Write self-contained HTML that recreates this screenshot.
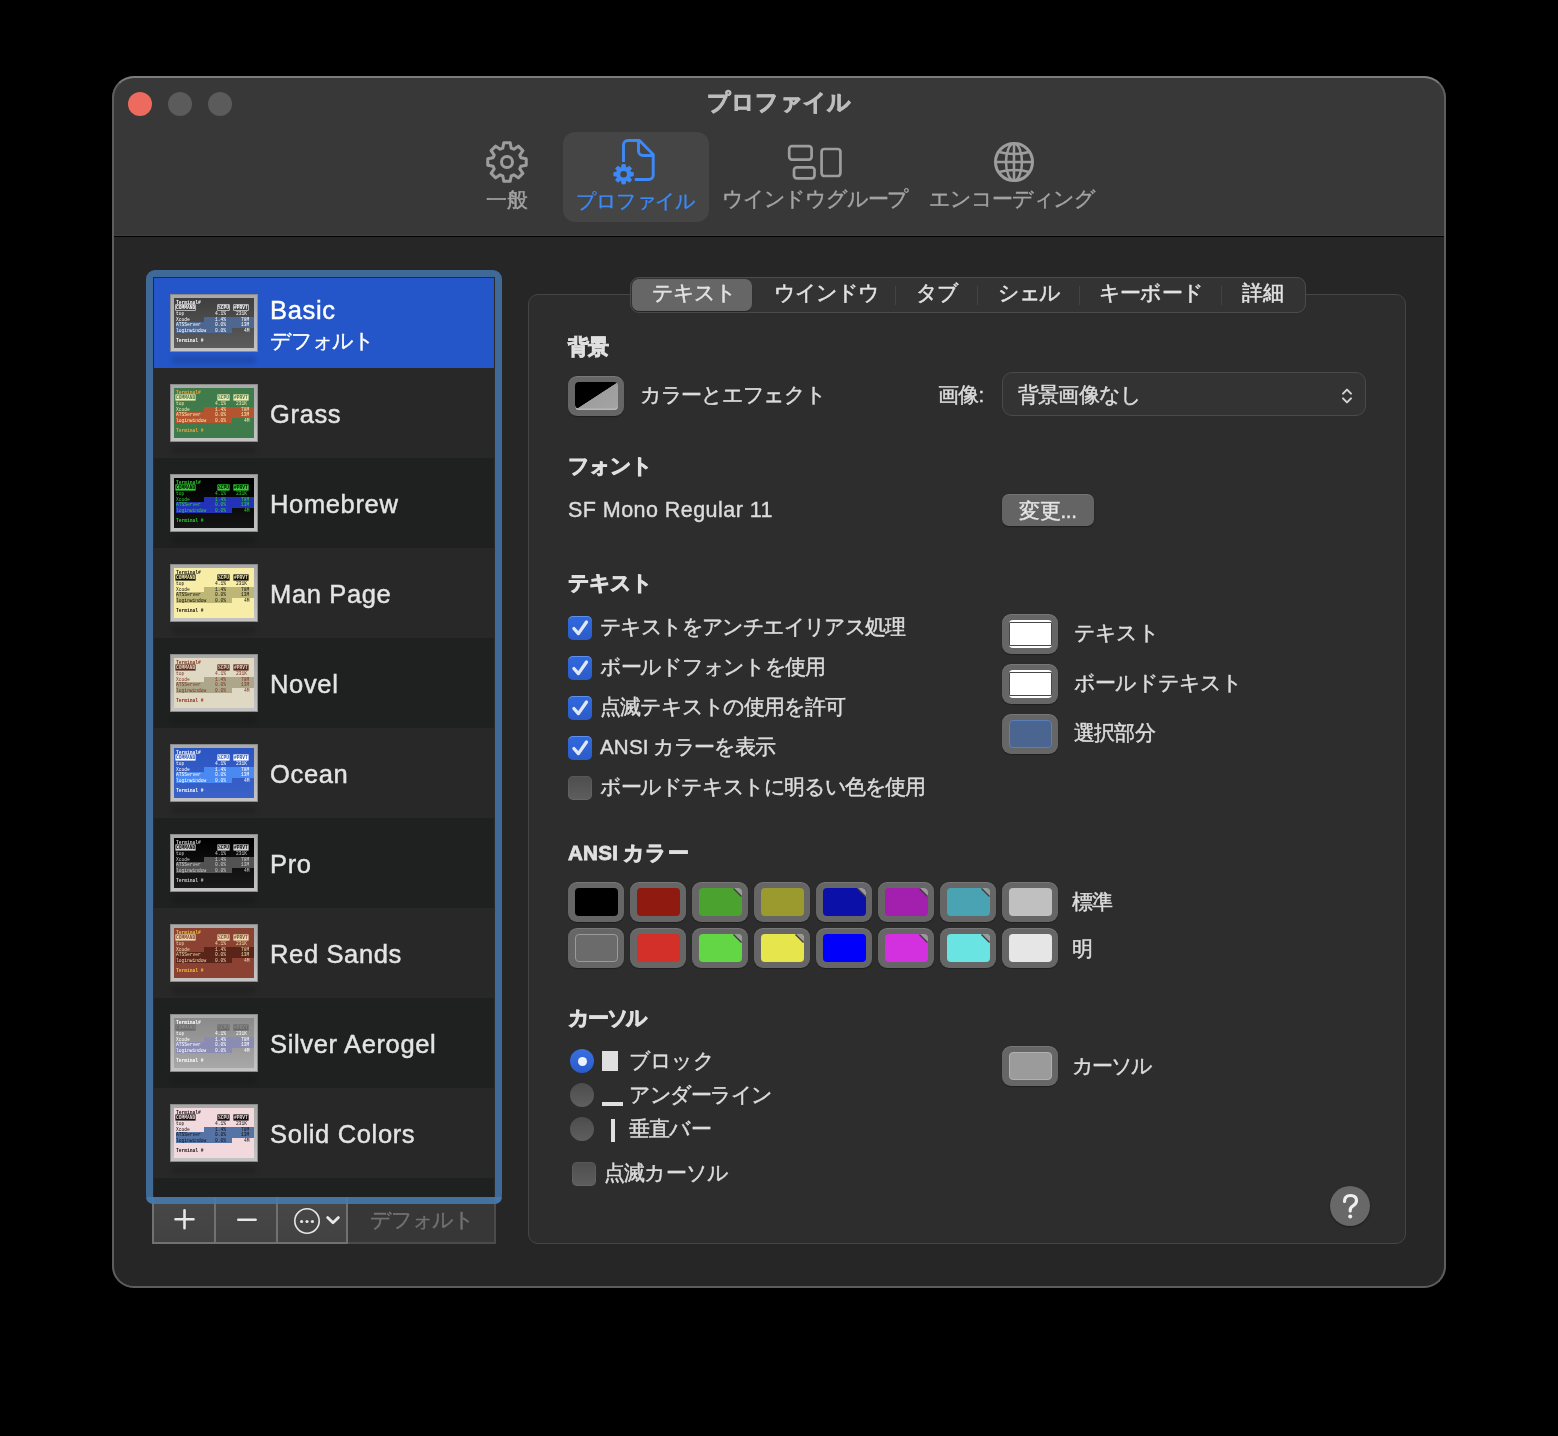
<!DOCTYPE html><html><head><meta charset="utf-8"><style>
*{box-sizing:border-box;margin:0;padding:0}
html,body{width:1558px;height:1436px;background:#000;overflow:hidden;font-family:'Liberation Sans',sans-serif;}
.a{position:absolute}
.t{position:absolute;white-space:nowrap;line-height:1;color:#dedede;will-change:transform;-webkit-text-stroke-width:0.4px}
.win{position:absolute;left:112px;top:76px;width:1334px;height:1212px;border-radius:22px;background:#262626;overflow:hidden;}
.winb{position:absolute;left:112px;top:76px;width:1334px;height:1212px;border-radius:22px;border:2px solid #5d5d5d;border-top-color:#7c7c7c;pointer-events:none}
.title{position:absolute;left:0;top:0;width:1334px;height:161px;background:#373837;border-bottom:1px solid #020202;box-shadow:inset 0 -1px 0 #3e3f3e}
.dot{position:absolute;width:24px;height:24px;border-radius:50%}
.thumb{position:absolute;width:88px;height:58px;background:linear-gradient(#a9a9a9,#c4c4c4);border:1px solid #8a8a8a}
.thumb .in{position:absolute;left:3px;top:3px;width:80px;height:50px;overflow:hidden;font-family:'Liberation Mono',monospace;font-size:4.6px;line-height:5px;font-weight:normal;will-change:transform}
.row{position:absolute;left:154px;width:340px;height:90px}
.lbl{position:absolute;will-change:transform;-webkit-text-stroke-width:0.45px;left:270px;font-size:25.5px;letter-spacing:0.65px;color:#e4e4e4;white-space:nowrap;line-height:1}
.cb{position:absolute;width:24px;height:24px;border-radius:5px}
.cbon{background:linear-gradient(#3069de,#2b5cc9);box-shadow:inset 0 1px 0 rgba(140,180,255,0.5)}
.cboff{background:linear-gradient(#4e4e4e,#5e5e5e);box-shadow:inset 0 0 0 1px rgba(255,255,255,0.05)}
.well{position:absolute;width:56px;height:40px;border-radius:9px;background:#666;box-shadow:inset 0 1px 0 rgba(255,255,255,0.12),0 0.5px 1px rgba(0,0,0,0.3)}
.well .sw{position:absolute;left:6.6px;top:6.3px;width:43px;height:27.5px;border-radius:4px;overflow:hidden}
.radio{position:absolute;width:24px;height:24px;border-radius:50%}
</style></head><body><div class="win">
<div class="title"></div>
</div>
<div class="winb"></div>
<div class="dot a" style="left:128px;top:92px;background:#ec6a5e"></div>
<div class="dot a" style="left:168px;top:92px;background:#5b5b5b"></div>
<div class="dot a" style="left:208px;top:92px;background:#5b5b5b"></div>
<div class="t" style="left:707px;top:92px;font-size:22.5px;font-weight:bold;color:#bdbdbd;-webkit-text-stroke:0.9px #bdbdbd">プロファイル</div>
<div class="a" style="left:563px;top:132px;width:146px;height:90px;border-radius:12px;background:#454545"></div>
<svg class="a" style="left:486px;top:141px" width="42" height="42" viewBox="0 0 42 42"><path d="M34.88,16.79 L40.24,17.80 L40.24,24.20 L34.88,25.21 L33.79,27.84 L36.87,32.34 L32.34,36.87 L27.84,33.79 L25.21,34.88 L24.20,40.24 L17.80,40.24 L16.79,34.88 L14.16,33.79 L9.66,36.87 L5.13,32.34 L8.21,27.84 L7.12,25.21 L1.76,24.20 L1.76,17.80 L7.12,16.79 L8.21,14.16 L5.13,9.66 L9.66,5.13 L14.16,8.21 L16.79,7.12 L17.80,1.76 L24.20,1.76 L25.21,7.12 L27.84,8.21 L32.34,5.13 L36.87,9.66 L33.79,14.16Z" fill="none" stroke="#9d9d9d" stroke-width="3" stroke-linejoin="round"/><circle cx="21" cy="21" r="5.5" fill="none" stroke="#9d9d9d" stroke-width="3"/></svg>
<div class="t" style="left:486px;top:189px;font-size:21px;color:#a3a3a3">一般</div>
<svg class="a" style="left:600px;top:132px" width="70" height="60" viewBox="0 0 70 60"><path d="M23.5 30 V13 a4.5 4.5 0 0 1 4.5 -4.5 H39.5 L53.2 22.5 V43 a4.5 4.5 0 0 1 -4.5 4.5 H34.8" fill="none" stroke="#3d8af7" stroke-width="2.9" stroke-linejoin="round"/><path d="M38.5 8.5 V19 a4.5 4.5 0 0 0 4.5 4.5 H53.2" fill="none" stroke="#3d8af7" stroke-width="2.9" stroke-linejoin="round"/><g transform="translate(23.6,42.2)"><path d="M6.89,-2.09 L9.77,-1.63 L9.77,1.63 L6.89,2.09 L6.35,3.39 L8.05,5.76 L5.76,8.05 L3.39,6.35 L2.09,6.89 L1.63,9.77 L-1.63,9.77 L-2.09,6.89 L-3.39,6.35 L-5.76,8.05 L-8.05,5.76 L-6.35,3.39 L-6.89,2.09 L-9.77,1.63 L-9.77,-1.63 L-6.89,-2.09 L-6.35,-3.39 L-8.05,-5.76 L-5.76,-8.05 L-3.39,-6.35 L-2.09,-6.89 L-1.63,-9.77 L1.63,-9.77 L2.09,-6.89 L3.39,-6.35 L5.76,-8.05 L8.05,-5.76 L6.35,-3.39Z" fill="#3d8af7" stroke="#3d8af7" stroke-width="0.8" stroke-linejoin="round"/><circle r="3.3" fill="#454545"/></g></svg>
<div class="t" style="left:576px;top:191px;font-size:20px;color:#3d8af7;letter-spacing:-0.15px;-webkit-text-stroke-width:0.3px">プロファイル</div>
<svg class="a" style="left:785px;top:142px" width="60" height="40" viewBox="0 0 60 40"><rect x="4.2" y="4.2" width="22.4" height="13.4" rx="2.8" fill="none" stroke="#9d9d9d" stroke-width="2.7"/><rect x="9" y="25.3" width="20.5" height="11" rx="2.8" fill="none" stroke="#9d9d9d" stroke-width="2.7"/><rect x="36.6" y="7" width="18.8" height="27" rx="2.8" fill="none" stroke="#9d9d9d" stroke-width="2.7"/></svg>
<div class="t" style="left:722px;top:189px;font-size:20.5px;color:#a3a3a3;letter-spacing:-1.2px">ウインドウグループ</div>
<svg class="a" style="left:992px;top:141px" width="44" height="44" viewBox="0 0 44 44"><circle cx="22" cy="21" r="18.5" fill="none" stroke="#9d9d9d" stroke-width="3"/><ellipse cx="22" cy="21" rx="8" ry="18.5" fill="none" stroke="#9d9d9d" stroke-width="2.5"/><line x1="22" y1="3" x2="22" y2="39" stroke="#9d9d9d" stroke-width="2.5"/><line x1="3.5" y1="21" x2="40.5" y2="21" stroke="#9d9d9d" stroke-width="2.5"/><path d="M7 11 Q22 15 37 11 M7 31 Q22 27 37 31" fill="none" stroke="#9d9d9d" stroke-width="2.5"/></svg>
<div class="t" style="left:929px;top:189px;font-size:20.5px;color:#a3a3a3;letter-spacing:-1.1px">エンコーディング</div>
<div class="a" style="left:146px;top:270px;width:356px;height:934px;border-radius:9px;background:#3f6a97"></div>
<div class="a" style="left:153px;top:277px;width:342px;height:920px;background:#2a2a2a"></div>
<div class="row" style="top:278px;background:#2456c9"></div>
<div class="a" style="left:172px;top:356px;width:84px;height:8px;border-radius:4px;background:rgba(0,0,0,0.12);filter:blur(2px)"></div>
<div class="thumb" style="left:170px;top:294px"><div class="in" style="background:linear-gradient(#3f3f3f,#5c5c5c);color:#ffffff"><div class="a" style="left:30px;top:18.8px;width:50px;height:5.6px;background:#4d6790"></div><div class="a" style="left:2px;top:24.4px;width:78px;height:5.4px;background:#4d6790"></div><div class="a" style="left:2px;top:29.8px;width:56px;height:5.3px;background:#4d6790"></div><div class="a" style="left:2px;top:1.5px;color:#ffffff;font-weight:bold">Terminal#</div><div class="a" style="left:2px;top:7px;background:transparent;color:#ffffff;height:5px;line-height:5px;box-shadow:0 0 0 0.6px #ffffff;font-weight:bold">COMMAND</div><div class="a" style="left:44px;top:7px;background:transparent;color:#ffffff;height:5px;line-height:5px;box-shadow:0 0 0 0.6px #ffffff;font-weight:bold">%CPU</div><div class="a" style="left:60px;top:7px;background:transparent;color:#ffffff;height:5px;line-height:5px;box-shadow:0 0 0 0.6px #ffffff;font-weight:bold">#PRVT</div><div class="a" style="left:2px;top:13px">top</div><div class="a" style="left:41px;top:13px">4.1%</div><div class="a" style="left:62px;top:13px">231K</div><div class="a" style="left:2px;top:18.5px">Xcode</div><div class="a" style="left:41px;top:18.5px">1.4%</div><div class="a" style="left:67px;top:18.5px">78M</div><div class="a" style="left:2px;top:24px">ATSServer</div><div class="a" style="left:41px;top:24px">0.0%</div><div class="a" style="left:67px;top:24px">13M</div><div class="a" style="left:2px;top:29.5px">loginwindow</div><div class="a" style="left:41px;top:29.5px">0.0%</div><div class="a" style="left:70px;top:29.5px">4M</div><div class="a" style="left:2px;top:40px;color:#ffffff;font-weight:bold">Terminal #</div></div></div>
<div class="lbl" style="top:298px;color:#fff">Basic</div>
<div class="t" style="left:270px;top:330px;font-size:21px;color:#fff;letter-spacing:-1.2px">デフォルト</div>
<div class="row" style="top:368px;background:#282828"></div>
<div class="a" style="left:172px;top:446px;width:84px;height:8px;border-radius:4px;background:rgba(0,0,0,0.12);filter:blur(2px)"></div>
<div class="thumb" style="left:170px;top:384px"><div class="in" style="background:#3f7b4b;color:#f4eab0"><div class="a" style="left:30px;top:18.8px;width:50px;height:5.6px;background:#b4552f"></div><div class="a" style="left:2px;top:24.4px;width:78px;height:5.4px;background:#b4552f"></div><div class="a" style="left:2px;top:29.8px;width:56px;height:5.3px;background:#b4552f"></div><div class="a" style="left:2px;top:1.5px;color:#f0a848;font-weight:bold">Terminal#</div><div class="a" style="left:2px;top:7px;background:#f4eab0;color:#3f7b4b;height:5px;line-height:5px;box-shadow:0 0 0 0.6px #f4eab0;font-weight:bold">COMMAND</div><div class="a" style="left:44px;top:7px;background:#f4eab0;color:#3f7b4b;height:5px;line-height:5px;box-shadow:0 0 0 0.6px #f4eab0;font-weight:bold">%CPU</div><div class="a" style="left:60px;top:7px;background:#f4eab0;color:#3f7b4b;height:5px;line-height:5px;box-shadow:0 0 0 0.6px #f4eab0;font-weight:bold">#PRVT</div><div class="a" style="left:2px;top:13px">top</div><div class="a" style="left:41px;top:13px">4.1%</div><div class="a" style="left:62px;top:13px">231K</div><div class="a" style="left:2px;top:18.5px">Xcode</div><div class="a" style="left:41px;top:18.5px">1.4%</div><div class="a" style="left:67px;top:18.5px">78M</div><div class="a" style="left:2px;top:24px">ATSServer</div><div class="a" style="left:41px;top:24px">0.0%</div><div class="a" style="left:67px;top:24px">13M</div><div class="a" style="left:2px;top:29.5px">loginwindow</div><div class="a" style="left:41px;top:29.5px">0.0%</div><div class="a" style="left:70px;top:29.5px">4M</div><div class="a" style="left:2px;top:40px;color:#f0a848;font-weight:bold">Terminal #</div></div></div>
<div class="lbl" style="top:401.5px">Grass</div>
<div class="row" style="top:458px;background:#1f2020"></div>
<div class="a" style="left:172px;top:536px;width:84px;height:8px;border-radius:4px;background:rgba(0,0,0,0.12);filter:blur(2px)"></div>
<div class="thumb" style="left:170px;top:474px"><div class="in" style="background:linear-gradient(#000,#141414);color:#33d033"><div class="a" style="left:30px;top:18.8px;width:50px;height:5.6px;background:#2233b8"></div><div class="a" style="left:2px;top:24.4px;width:78px;height:5.4px;background:#2233b8"></div><div class="a" style="left:2px;top:29.8px;width:56px;height:5.3px;background:#2233b8"></div><div class="a" style="left:2px;top:1.5px;color:#33d033;font-weight:bold">Terminal#</div><div class="a" style="left:2px;top:7px;background:#33d033;color:#000000;height:5px;line-height:5px;box-shadow:0 0 0 0.6px #33d033;font-weight:bold">COMMAND</div><div class="a" style="left:44px;top:7px;background:#33d033;color:#000000;height:5px;line-height:5px;box-shadow:0 0 0 0.6px #33d033;font-weight:bold">%CPU</div><div class="a" style="left:60px;top:7px;background:#33d033;color:#000000;height:5px;line-height:5px;box-shadow:0 0 0 0.6px #33d033;font-weight:bold">#PRVT</div><div class="a" style="left:2px;top:13px">top</div><div class="a" style="left:41px;top:13px">4.1%</div><div class="a" style="left:62px;top:13px">231K</div><div class="a" style="left:2px;top:18.5px">Xcode</div><div class="a" style="left:41px;top:18.5px">1.4%</div><div class="a" style="left:67px;top:18.5px">78M</div><div class="a" style="left:2px;top:24px">ATSServer</div><div class="a" style="left:41px;top:24px">0.0%</div><div class="a" style="left:67px;top:24px">13M</div><div class="a" style="left:2px;top:29.5px">loginwindow</div><div class="a" style="left:41px;top:29.5px">0.0%</div><div class="a" style="left:70px;top:29.5px">4M</div><div class="a" style="left:2px;top:40px;color:#33d033;font-weight:bold">Terminal #</div></div></div>
<div class="lbl" style="top:491.5px">Homebrew</div>
<div class="row" style="top:548px;background:#282828"></div>
<div class="a" style="left:172px;top:626px;width:84px;height:8px;border-radius:4px;background:rgba(0,0,0,0.12);filter:blur(2px)"></div>
<div class="thumb" style="left:170px;top:564px"><div class="in" style="background:#f7eda6;color:#111111"><div class="a" style="left:30px;top:18.8px;width:50px;height:5.6px;background:#bdb676"></div><div class="a" style="left:2px;top:24.4px;width:78px;height:5.4px;background:#bdb676"></div><div class="a" style="left:2px;top:29.8px;width:56px;height:5.3px;background:#bdb676"></div><div class="a" style="left:2px;top:1.5px;color:#111111;font-weight:bold">Terminal#</div><div class="a" style="left:2px;top:7px;background:#111111;color:#f7eda6;height:5px;line-height:5px;box-shadow:0 0 0 0.6px #111111;font-weight:bold">COMMAND</div><div class="a" style="left:44px;top:7px;background:#111111;color:#f7eda6;height:5px;line-height:5px;box-shadow:0 0 0 0.6px #111111;font-weight:bold">%CPU</div><div class="a" style="left:60px;top:7px;background:#111111;color:#f7eda6;height:5px;line-height:5px;box-shadow:0 0 0 0.6px #111111;font-weight:bold">#PRVT</div><div class="a" style="left:2px;top:13px">top</div><div class="a" style="left:41px;top:13px">4.1%</div><div class="a" style="left:62px;top:13px">231K</div><div class="a" style="left:2px;top:18.5px">Xcode</div><div class="a" style="left:41px;top:18.5px">1.4%</div><div class="a" style="left:67px;top:18.5px">78M</div><div class="a" style="left:2px;top:24px">ATSServer</div><div class="a" style="left:41px;top:24px">0.0%</div><div class="a" style="left:67px;top:24px">13M</div><div class="a" style="left:2px;top:29.5px">loginwindow</div><div class="a" style="left:41px;top:29.5px">0.0%</div><div class="a" style="left:70px;top:29.5px">4M</div><div class="a" style="left:2px;top:40px;color:#111111;font-weight:bold">Terminal #</div></div></div>
<div class="lbl" style="top:581.5px">Man Page</div>
<div class="row" style="top:638px;background:#1f2020"></div>
<div class="a" style="left:172px;top:716px;width:84px;height:8px;border-radius:4px;background:rgba(0,0,0,0.12);filter:blur(2px)"></div>
<div class="thumb" style="left:170px;top:654px"><div class="in" style="background:#dfd9c3;color:#7a3325"><div class="a" style="left:30px;top:18.8px;width:50px;height:5.6px;background:#aca78a"></div><div class="a" style="left:2px;top:24.4px;width:78px;height:5.4px;background:#aca78a"></div><div class="a" style="left:2px;top:29.8px;width:56px;height:5.3px;background:#aca78a"></div><div class="a" style="left:2px;top:1.5px;color:#8a2a1a;font-weight:bold">Terminal#</div><div class="a" style="left:2px;top:7px;background:#5a2a20;color:#dfd9c3;height:5px;line-height:5px;box-shadow:0 0 0 0.6px #5a2a20;font-weight:bold">COMMAND</div><div class="a" style="left:44px;top:7px;background:#5a2a20;color:#dfd9c3;height:5px;line-height:5px;box-shadow:0 0 0 0.6px #5a2a20;font-weight:bold">%CPU</div><div class="a" style="left:60px;top:7px;background:#5a2a20;color:#dfd9c3;height:5px;line-height:5px;box-shadow:0 0 0 0.6px #5a2a20;font-weight:bold">#PRVT</div><div class="a" style="left:2px;top:13px">top</div><div class="a" style="left:41px;top:13px">4.1%</div><div class="a" style="left:62px;top:13px">231K</div><div class="a" style="left:2px;top:18.5px">Xcode</div><div class="a" style="left:41px;top:18.5px">1.4%</div><div class="a" style="left:67px;top:18.5px">78M</div><div class="a" style="left:2px;top:24px">ATSServer</div><div class="a" style="left:41px;top:24px">0.0%</div><div class="a" style="left:67px;top:24px">13M</div><div class="a" style="left:2px;top:29.5px">loginwindow</div><div class="a" style="left:41px;top:29.5px">0.0%</div><div class="a" style="left:70px;top:29.5px">4M</div><div class="a" style="left:2px;top:40px;color:#8a2a1a;font-weight:bold">Terminal #</div></div></div>
<div class="lbl" style="top:671.5px">Novel</div>
<div class="row" style="top:728px;background:#282828"></div>
<div class="a" style="left:172px;top:806px;width:84px;height:8px;border-radius:4px;background:rgba(0,0,0,0.12);filter:blur(2px)"></div>
<div class="thumb" style="left:170px;top:744px"><div class="in" style="background:linear-gradient(#2b55c2,#3a62c8);color:#ffffff"><div class="a" style="left:30px;top:18.8px;width:50px;height:5.6px;background:#4a88f2"></div><div class="a" style="left:2px;top:24.4px;width:78px;height:5.4px;background:#4a88f2"></div><div class="a" style="left:2px;top:29.8px;width:56px;height:5.3px;background:#4a88f2"></div><div class="a" style="left:2px;top:1.5px;color:#ffffff;font-weight:bold">Terminal#</div><div class="a" style="left:2px;top:7px;background:#ffffff;color:#2b55c2;height:5px;line-height:5px;box-shadow:0 0 0 0.6px #ffffff;font-weight:bold">COMMAND</div><div class="a" style="left:44px;top:7px;background:#ffffff;color:#2b55c2;height:5px;line-height:5px;box-shadow:0 0 0 0.6px #ffffff;font-weight:bold">%CPU</div><div class="a" style="left:60px;top:7px;background:#ffffff;color:#2b55c2;height:5px;line-height:5px;box-shadow:0 0 0 0.6px #ffffff;font-weight:bold">#PRVT</div><div class="a" style="left:2px;top:13px">top</div><div class="a" style="left:41px;top:13px">4.1%</div><div class="a" style="left:62px;top:13px">231K</div><div class="a" style="left:2px;top:18.5px">Xcode</div><div class="a" style="left:41px;top:18.5px">1.4%</div><div class="a" style="left:67px;top:18.5px">78M</div><div class="a" style="left:2px;top:24px">ATSServer</div><div class="a" style="left:41px;top:24px">0.0%</div><div class="a" style="left:67px;top:24px">13M</div><div class="a" style="left:2px;top:29.5px">loginwindow</div><div class="a" style="left:41px;top:29.5px">0.0%</div><div class="a" style="left:70px;top:29.5px">4M</div><div class="a" style="left:2px;top:40px;color:#ffffff;font-weight:bold">Terminal #</div></div></div>
<div class="lbl" style="top:761.5px">Ocean</div>
<div class="row" style="top:818px;background:#1f2020"></div>
<div class="a" style="left:172px;top:896px;width:84px;height:8px;border-radius:4px;background:rgba(0,0,0,0.12);filter:blur(2px)"></div>
<div class="thumb" style="left:170px;top:834px"><div class="in" style="background:linear-gradient(#000,#1c1c1c);color:#cfcfcf"><div class="a" style="left:30px;top:18.8px;width:50px;height:5.6px;background:#525252"></div><div class="a" style="left:2px;top:24.4px;width:78px;height:5.4px;background:#525252"></div><div class="a" style="left:2px;top:29.8px;width:56px;height:5.3px;background:#525252"></div><div class="a" style="left:2px;top:1.5px;color:#cfcfcf;font-weight:bold">Terminal#</div><div class="a" style="left:2px;top:7px;background:#cfcfcf;color:#000000;height:5px;line-height:5px;box-shadow:0 0 0 0.6px #cfcfcf;font-weight:bold">COMMAND</div><div class="a" style="left:44px;top:7px;background:#cfcfcf;color:#000000;height:5px;line-height:5px;box-shadow:0 0 0 0.6px #cfcfcf;font-weight:bold">%CPU</div><div class="a" style="left:60px;top:7px;background:#cfcfcf;color:#000000;height:5px;line-height:5px;box-shadow:0 0 0 0.6px #cfcfcf;font-weight:bold">#PRVT</div><div class="a" style="left:2px;top:13px">top</div><div class="a" style="left:41px;top:13px">4.1%</div><div class="a" style="left:62px;top:13px">231K</div><div class="a" style="left:2px;top:18.5px">Xcode</div><div class="a" style="left:41px;top:18.5px">1.4%</div><div class="a" style="left:67px;top:18.5px">78M</div><div class="a" style="left:2px;top:24px">ATSServer</div><div class="a" style="left:41px;top:24px">0.0%</div><div class="a" style="left:67px;top:24px">13M</div><div class="a" style="left:2px;top:29.5px">loginwindow</div><div class="a" style="left:41px;top:29.5px">0.0%</div><div class="a" style="left:70px;top:29.5px">4M</div><div class="a" style="left:2px;top:40px;color:#cfcfcf;font-weight:bold">Terminal #</div></div></div>
<div class="lbl" style="top:851.5px">Pro</div>
<div class="row" style="top:908px;background:#282828"></div>
<div class="a" style="left:172px;top:986px;width:84px;height:8px;border-radius:4px;background:rgba(0,0,0,0.12);filter:blur(2px)"></div>
<div class="thumb" style="left:170px;top:924px"><div class="in" style="background:#8c4232;color:#e8dcb0"><div class="a" style="left:30px;top:18.8px;width:50px;height:5.6px;background:#5a2418"></div><div class="a" style="left:2px;top:24.4px;width:78px;height:5.4px;background:#5a2418"></div><div class="a" style="left:2px;top:29.8px;width:56px;height:5.3px;background:#5a2418"></div><div class="a" style="left:2px;top:1.5px;color:#f0c040;font-weight:bold">Terminal#</div><div class="a" style="left:2px;top:7px;background:#e8dcb0;color:#8c4232;height:5px;line-height:5px;box-shadow:0 0 0 0.6px #e8dcb0;font-weight:bold">COMMAND</div><div class="a" style="left:44px;top:7px;background:#e8dcb0;color:#8c4232;height:5px;line-height:5px;box-shadow:0 0 0 0.6px #e8dcb0;font-weight:bold">%CPU</div><div class="a" style="left:60px;top:7px;background:#e8dcb0;color:#8c4232;height:5px;line-height:5px;box-shadow:0 0 0 0.6px #e8dcb0;font-weight:bold">#PRVT</div><div class="a" style="left:2px;top:13px">top</div><div class="a" style="left:41px;top:13px">4.1%</div><div class="a" style="left:62px;top:13px">231K</div><div class="a" style="left:2px;top:18.5px">Xcode</div><div class="a" style="left:41px;top:18.5px">1.4%</div><div class="a" style="left:67px;top:18.5px">78M</div><div class="a" style="left:2px;top:24px">ATSServer</div><div class="a" style="left:41px;top:24px">0.0%</div><div class="a" style="left:67px;top:24px">13M</div><div class="a" style="left:2px;top:29.5px">loginwindow</div><div class="a" style="left:41px;top:29.5px">0.0%</div><div class="a" style="left:70px;top:29.5px">4M</div><div class="a" style="left:2px;top:40px;color:#f0c040;font-weight:bold">Terminal #</div></div></div>
<div class="lbl" style="top:941.5px">Red Sands</div>
<div class="row" style="top:998px;background:#1f2020"></div>
<div class="a" style="left:172px;top:1076px;width:84px;height:8px;border-radius:4px;background:rgba(0,0,0,0.12);filter:blur(2px)"></div>
<div class="thumb" style="left:170px;top:1014px"><div class="in" style="background:linear-gradient(#8a8a8a,#a8a8a8);color:#ffffff"><div class="a" style="left:30px;top:18.8px;width:50px;height:5.6px;background:#8b8cb4"></div><div class="a" style="left:2px;top:24.4px;width:78px;height:5.4px;background:#8b8cb4"></div><div class="a" style="left:2px;top:29.8px;width:56px;height:5.3px;background:#8b8cb4"></div><div class="a" style="left:2px;top:1.5px;color:#ffffff;font-weight:bold">Terminal#</div><div class="a" style="left:2px;top:7px;background:#6a6a6a;color:#8a8a8a;height:5px;line-height:5px;box-shadow:0 0 0 0.6px #6a6a6a;font-weight:bold">COMMAND</div><div class="a" style="left:44px;top:7px;background:#6a6a6a;color:#8a8a8a;height:5px;line-height:5px;box-shadow:0 0 0 0.6px #6a6a6a;font-weight:bold">%CPU</div><div class="a" style="left:60px;top:7px;background:#6a6a6a;color:#8a8a8a;height:5px;line-height:5px;box-shadow:0 0 0 0.6px #6a6a6a;font-weight:bold">#PRVT</div><div class="a" style="left:2px;top:13px">top</div><div class="a" style="left:41px;top:13px">4.1%</div><div class="a" style="left:62px;top:13px">231K</div><div class="a" style="left:2px;top:18.5px">Xcode</div><div class="a" style="left:41px;top:18.5px">1.4%</div><div class="a" style="left:67px;top:18.5px">78M</div><div class="a" style="left:2px;top:24px">ATSServer</div><div class="a" style="left:41px;top:24px">0.0%</div><div class="a" style="left:67px;top:24px">13M</div><div class="a" style="left:2px;top:29.5px">loginwindow</div><div class="a" style="left:41px;top:29.5px">0.0%</div><div class="a" style="left:70px;top:29.5px">4M</div><div class="a" style="left:2px;top:40px;color:#ffffff;font-weight:bold">Terminal #</div></div></div>
<div class="lbl" style="top:1031.5px">Silver Aerogel</div>
<div class="row" style="top:1088px;background:#282828"></div>
<div class="a" style="left:172px;top:1166px;width:84px;height:8px;border-radius:4px;background:rgba(0,0,0,0.12);filter:blur(2px)"></div>
<div class="thumb" style="left:170px;top:1104px"><div class="in" style="background:#f2d9de;color:#111111"><div class="a" style="left:30px;top:18.8px;width:50px;height:5.6px;background:#5573a5"></div><div class="a" style="left:2px;top:24.4px;width:78px;height:5.4px;background:#5573a5"></div><div class="a" style="left:2px;top:29.8px;width:56px;height:5.3px;background:#5573a5"></div><div class="a" style="left:2px;top:1.5px;color:#111111;font-weight:bold">Terminal#</div><div class="a" style="left:2px;top:7px;background:#111111;color:#f2d9de;height:5px;line-height:5px;box-shadow:0 0 0 0.6px #111111;font-weight:bold">COMMAND</div><div class="a" style="left:44px;top:7px;background:#111111;color:#f2d9de;height:5px;line-height:5px;box-shadow:0 0 0 0.6px #111111;font-weight:bold">%CPU</div><div class="a" style="left:60px;top:7px;background:#111111;color:#f2d9de;height:5px;line-height:5px;box-shadow:0 0 0 0.6px #111111;font-weight:bold">#PRVT</div><div class="a" style="left:2px;top:13px">top</div><div class="a" style="left:41px;top:13px">4.1%</div><div class="a" style="left:62px;top:13px">231K</div><div class="a" style="left:2px;top:18.5px">Xcode</div><div class="a" style="left:41px;top:18.5px">1.4%</div><div class="a" style="left:67px;top:18.5px">78M</div><div class="a" style="left:2px;top:24px">ATSServer</div><div class="a" style="left:41px;top:24px">0.0%</div><div class="a" style="left:67px;top:24px">13M</div><div class="a" style="left:2px;top:29.5px">loginwindow</div><div class="a" style="left:41px;top:29.5px">0.0%</div><div class="a" style="left:70px;top:29.5px">4M</div><div class="a" style="left:2px;top:40px;color:#111111;font-weight:bold">Terminal #</div></div></div>
<div class="lbl" style="top:1121.5px">Solid Colors</div>
<div class="row" style="top:1178px;height:19px;background:#1f2020"></div>
<div class="a" style="left:152px;top:1197px;width:344px;height:47px;background:linear-gradient(#484848,#424242);border:2px solid #717171;border-top:none"></div>
<div class="a" style="left:214px;top:1197px;width:2px;height:47px;background:#717171"></div>
<div class="a" style="left:276px;top:1197px;width:2px;height:47px;background:#717171"></div>
<div class="a" style="left:346px;top:1197px;width:2px;height:47px;background:#717171"></div>
<div class="a" style="left:348px;top:1197px;width:148px;height:47px;background:#373737;border-right:2px solid #4b4b4b;border-bottom:2px solid #4b4b4b"></div>
<div class="a" style="left:146px;top:1197px;width:356px;height:7px;border-radius:0 0 9px 9px;background:rgba(70,122,175,0.88)"></div>
<svg class="a" style="left:172px;top:1206px" width="26" height="26" viewBox="0 0 26 26"><path d="M12.5 4.3V22.3M3.5 13.3H21.5" stroke="#e8e8e8" stroke-width="2.6" stroke-linecap="round"/></svg>
<svg class="a" style="left:234px;top:1207px" width="26" height="26" viewBox="0 0 26 26"><path d="M4.3 12.8H21.6" stroke="#e8e8e8" stroke-width="2.6" stroke-linecap="round"/></svg>
<svg class="a" style="left:290px;top:1204px" width="56" height="34" viewBox="0 0 56 34"><circle cx="17" cy="17" r="12.2" fill="none" stroke="#e6e6e6" stroke-width="1.6"/><circle cx="11.6" cy="17.5" r="1.6" fill="#e6e6e6"/><circle cx="17" cy="17.5" r="1.6" fill="#e6e6e6"/><circle cx="22.4" cy="17.5" r="1.6" fill="#e6e6e6"/><path d="M37.6 13.6 L43 18.8 L48.4 13.6" fill="none" stroke="#e8e8e8" stroke-width="2.8" stroke-linecap="round" stroke-linejoin="round"/></svg>
<div class="t" style="left:370px;top:1208.5px;font-size:21px;color:#717171;letter-spacing:-1.2px">デフォルト</div>
<div class="a" style="left:528px;top:294px;width:878px;height:950px;border-radius:10px;background:#2d2d2d;border:1.5px solid #454545"></div>
<div class="a" style="left:630px;top:277px;width:676px;height:36px;border-radius:9px;background:#333333;border:1.5px solid #4b4b4b"></div>
<div class="a" style="left:632px;top:279px;width:120px;height:32px;border-radius:7px;background:#666;box-shadow:0 1px 1px rgba(0,0,0,0.3)"></div>
<div class="a" style="left:895px;top:286px;width:1px;height:19px;background:#434343"></div>
<div class="a" style="left:977px;top:286px;width:1px;height:19px;background:#434343"></div>
<div class="a" style="left:1079px;top:286px;width:1px;height:19px;background:#434343"></div>
<div class="a" style="left:1221px;top:286px;width:1px;height:19px;background:#434343"></div>
<div class="t" style="left:652px;top:283px;font-size:20.5px;color:#e2e2e2;letter-spacing:-1px;-webkit-text-stroke-width:0.5px">テキスト</div>
<div class="t" style="left:774px;top:283px;font-size:20.5px;color:#e2e2e2;letter-spacing:-1px;-webkit-text-stroke-width:0.5px">ウインドウ</div>
<div class="t" style="left:916px;top:283px;font-size:20.5px;color:#e2e2e2;letter-spacing:-1.2px;-webkit-text-stroke-width:0.5px">タブ</div>
<div class="t" style="left:998px;top:283px;font-size:20.5px;color:#e2e2e2;letter-spacing:-1.3px;-webkit-text-stroke-width:0.5px">シェル</div>
<div class="t" style="left:1099px;top:283px;font-size:20.5px;color:#e2e2e2;letter-spacing:-0.8px;-webkit-text-stroke-width:0.5px">キーボード</div>
<div class="t" style="left:1242px;top:283px;font-size:20.5px;color:#e2e2e2;letter-spacing:0px;-webkit-text-stroke-width:0.5px">詳細</div>
<div class="t" style="left:568px;top:337px;font-size:20.5px;font-weight:bold;color:#e0e0e0;letter-spacing:-1px;-webkit-text-stroke:0.8px #e0e0e0">背景</div>
<div class="well" style="left:568px;top:376px"><div class="sw" style="background:linear-gradient(to top left,#a4a4a4 0%,#9e9e9e 49.3%,#000 50.7%,#000 100%);box-shadow:inset 0 -1.5px 0 #b8b8b8"></div></div>
<div class="t" style="left:640px;top:385px;font-size:20.5px;color:#dcdcdc;letter-spacing:-0.8px;-webkit-text-stroke:0.45px #dcdcdc;letter-spacing:-1.3px">カラーとエフェクト</div>
<div class="t" style="left:938px;top:385px;font-size:20.5px;color:#dcdcdc;letter-spacing:-0.8px;-webkit-text-stroke:0.45px #dcdcdc">画像:</div>
<div class="a" style="left:1002px;top:372px;width:364px;height:44px;border-radius:10px;background:#333333;border:1.5px solid #4a4a4a"></div>
<div class="t" style="left:1018px;top:385px;font-size:20.5px;color:#dcdcdc;letter-spacing:-0.8px;-webkit-text-stroke:0.45px #dcdcdc">背景画像なし</div>
<svg class="a" style="left:1339px;top:386px" width="16" height="20" viewBox="0 0 16 20"><path d="M4 7.6 L8 3.6 L12 7.6 M4 12.4 L8 16.4 L12 12.4" fill="none" stroke="#d4d4d4" stroke-width="2" stroke-linecap="round" stroke-linejoin="round"/></svg>
<div class="t" style="left:568px;top:456px;font-size:20.5px;font-weight:bold;color:#e0e0e0;letter-spacing:-1px;-webkit-text-stroke:0.8px #e0e0e0">フォント</div>
<div class="t" style="left:568px;top:500px;font-size:21.5px;color:#dcdcdc;letter-spacing:0.45px">SF Mono Regular 11</div>
<div class="a" style="left:1002px;top:494px;width:92px;height:32px;border-radius:7px;background:#646464;box-shadow:inset 0 1px 0 rgba(255,255,255,0.1),0 1px 1.5px rgba(0,0,0,0.35)"></div>
<div class="t" style="left:1019px;top:501px;font-size:20.5px;color:#dcdcdc;letter-spacing:-0.8px;-webkit-text-stroke:0.45px #dcdcdc;color:#e8e8e8;letter-spacing:-0.3px">変更...</div>
<div class="t" style="left:568px;top:573px;font-size:20.5px;font-weight:bold;color:#e0e0e0;letter-spacing:-1px;-webkit-text-stroke:0.8px #e0e0e0">テキスト</div>
<div class="cb cbon" style="left:568px;top:616px"><svg width="24" height="24" viewBox="0 0 24 24"><path d="M5.9 12.5 L10.4 17.6 L18.5 6" fill="none" stroke="#e2e7f6" stroke-width="3.3" stroke-linecap="round" stroke-linejoin="round"/></svg></div>
<div class="t" style="left:600px;top:617px;font-size:20.5px;color:#dcdcdc;letter-spacing:-0.8px;-webkit-text-stroke:0.45px #dcdcdc;letter-spacing:-1.6px">テキストをアンチエイリアス処理</div>
<div class="cb cbon" style="left:568px;top:656px"><svg width="24" height="24" viewBox="0 0 24 24"><path d="M5.9 12.5 L10.4 17.6 L18.5 6" fill="none" stroke="#e2e7f6" stroke-width="3.3" stroke-linecap="round" stroke-linejoin="round"/></svg></div>
<div class="t" style="left:600px;top:657px;font-size:20.5px;color:#dcdcdc;letter-spacing:-0.8px;-webkit-text-stroke:0.45px #dcdcdc;letter-spacing:-1.3px">ボールドフォントを使用</div>
<div class="cb cbon" style="left:568px;top:696px"><svg width="24" height="24" viewBox="0 0 24 24"><path d="M5.9 12.5 L10.4 17.6 L18.5 6" fill="none" stroke="#e2e7f6" stroke-width="3.3" stroke-linecap="round" stroke-linejoin="round"/></svg></div>
<div class="t" style="left:600px;top:697px;font-size:20.5px;color:#dcdcdc;letter-spacing:-0.8px;-webkit-text-stroke:0.45px #dcdcdc;letter-spacing:-1.1px">点滅テキストの使用を許可</div>
<div class="cb cbon" style="left:568px;top:736px"><svg width="24" height="24" viewBox="0 0 24 24"><path d="M5.9 12.5 L10.4 17.6 L18.5 6" fill="none" stroke="#e2e7f6" stroke-width="3.3" stroke-linecap="round" stroke-linejoin="round"/></svg></div>
<div class="t" style="left:600px;top:737px;font-size:20.5px;color:#dcdcdc;letter-spacing:-0.8px;-webkit-text-stroke:0.45px #dcdcdc;letter-spacing:-1.1px"><span style="letter-spacing:0.2px;margin-right:4px">ANSI</span>カラーを表示</div>
<div class="cb cboff" style="left:568px;top:776px"></div>
<div class="t" style="left:600px;top:777px;font-size:20.5px;color:#dcdcdc;letter-spacing:-0.8px;-webkit-text-stroke:0.45px #dcdcdc;letter-spacing:-1.4px">ボールドテキストに明るい色を使用</div>
<div class="well" style="left:1002px;top:614px"><div class="sw" style="background:#fff"><div class="a" style="left:0;top:2.2px;width:43px;height:23.8px;border:1px solid #484848;border-top-width:1.9px;border-bottom-width:1.9px;background:#fff"></div></div></div>
<div class="well" style="left:1002px;top:664px"><div class="sw" style="background:#fff"><div class="a" style="left:0;top:2.2px;width:43px;height:23.8px;border:1px solid #484848;border-top-width:1.9px;border-bottom-width:1.9px;background:#fff"></div></div></div>
<div class="well" style="left:1002px;top:714px"><div class="sw" style="background:#4a6590;border:1px solid #5b7fb8"></div></div>
<div class="t" style="left:1074px;top:623px;font-size:20.5px;color:#dcdcdc;letter-spacing:-0.8px;-webkit-text-stroke:0.45px #dcdcdc">テキスト</div>
<div class="t" style="left:1074px;top:673px;font-size:20.5px;color:#dcdcdc;letter-spacing:-0.8px;-webkit-text-stroke:0.45px #dcdcdc">ボールドテキスト</div>
<div class="t" style="left:1074px;top:723px;font-size:20.5px;color:#dcdcdc;letter-spacing:-0.8px;-webkit-text-stroke:0.45px #dcdcdc">選択部分</div>
<div class="t" style="left:568px;top:843px;font-size:20.5px;font-weight:bold;color:#e0e0e0;letter-spacing:-1px;-webkit-text-stroke:0.8px #e0e0e0;letter-spacing:0.3px">ANSI<span style="margin-left:5px">カラー</span></div>
<div class="well" style="left:568px;top:882px"><div class="sw" style="background:#000000"></div></div>
<div class="well" style="left:630px;top:882px"><div class="sw" style="background:#8e1a10"></div></div>
<div class="well" style="left:692px;top:882px"><div class="sw" style="background:#4ba22f"><svg class="a" style="right:0;top:0" width="9" height="9" viewBox="0 0 9 9"><path d="M0 0 H5 Q9 0 9 4 V9 Z" fill="#9a9a9a"/><path d="M0.5 0.5 L8.5 8.5" stroke="#3a3a3a" stroke-width="1.3"/></svg></div></div>
<div class="well" style="left:754px;top:882px"><div class="sw" style="background:#9a9a2e"></div></div>
<div class="well" style="left:816px;top:882px"><div class="sw" style="background:#0b10a8"><svg class="a" style="right:0;top:0" width="9" height="9" viewBox="0 0 9 9"><path d="M0 0 H5 Q9 0 9 4 V9 Z" fill="#9a9a9a"/><path d="M0.5 0.5 L8.5 8.5" stroke="#3a3a3a" stroke-width="1.3"/></svg></div></div>
<div class="well" style="left:878px;top:882px"><div class="sw" style="background:#a31fae"><svg class="a" style="right:0;top:0" width="9" height="9" viewBox="0 0 9 9"><path d="M0 0 H5 Q9 0 9 4 V9 Z" fill="#9a9a9a"/><path d="M0.5 0.5 L8.5 8.5" stroke="#3a3a3a" stroke-width="1.3"/></svg></div></div>
<div class="well" style="left:940px;top:882px"><div class="sw" style="background:#49a3b3"><svg class="a" style="right:0;top:0" width="9" height="9" viewBox="0 0 9 9"><path d="M0 0 H5 Q9 0 9 4 V9 Z" fill="#9a9a9a"/><path d="M0.5 0.5 L8.5 8.5" stroke="#3a3a3a" stroke-width="1.3"/></svg></div></div>
<div class="well" style="left:1002px;top:882px"><div class="sw" style="background:#c0c0c0"></div></div>
<div class="well" style="left:568px;top:928px"><div class="sw" style="background:#6b6b6b;border:1.5px solid #9a9a9a"></div></div>
<div class="well" style="left:630px;top:928px"><div class="sw" style="background:#d3302a"></div></div>
<div class="well" style="left:692px;top:928px"><div class="sw" style="background:#63d645"><svg class="a" style="right:0;top:0" width="9" height="9" viewBox="0 0 9 9"><path d="M0 0 H5 Q9 0 9 4 V9 Z" fill="#9a9a9a"/><path d="M0.5 0.5 L8.5 8.5" stroke="#3a3a3a" stroke-width="1.3"/></svg></div></div>
<div class="well" style="left:754px;top:928px"><div class="sw" style="background:#e6e54b"><svg class="a" style="right:0;top:0" width="9" height="9" viewBox="0 0 9 9"><path d="M0 0 H5 Q9 0 9 4 V9 Z" fill="#9a9a9a"/><path d="M0.5 0.5 L8.5 8.5" stroke="#3a3a3a" stroke-width="1.3"/></svg></div></div>
<div class="well" style="left:816px;top:928px"><div class="sw" style="background:#0000fb"></div></div>
<div class="well" style="left:878px;top:928px"><div class="sw" style="background:#d330e0"><svg class="a" style="right:0;top:0" width="9" height="9" viewBox="0 0 9 9"><path d="M0 0 H5 Q9 0 9 4 V9 Z" fill="#9a9a9a"/><path d="M0.5 0.5 L8.5 8.5" stroke="#3a3a3a" stroke-width="1.3"/></svg></div></div>
<div class="well" style="left:940px;top:928px"><div class="sw" style="background:#6ae3e3"><svg class="a" style="right:0;top:0" width="9" height="9" viewBox="0 0 9 9"><path d="M0 0 H5 Q9 0 9 4 V9 Z" fill="#9a9a9a"/><path d="M0.5 0.5 L8.5 8.5" stroke="#3a3a3a" stroke-width="1.3"/></svg></div></div>
<div class="well" style="left:1002px;top:928px"><div class="sw" style="background:#e6e6e6"></div></div>
<div class="t" style="left:1071.5px;top:892px;font-size:20.5px;color:#dcdcdc;letter-spacing:-0.8px;-webkit-text-stroke:0.45px #dcdcdc;letter-spacing:-1.4px">標準</div>
<div class="t" style="left:1072px;top:939px;font-size:20.5px;color:#dcdcdc;letter-spacing:-0.8px;-webkit-text-stroke:0.45px #dcdcdc">明</div>
<div class="t" style="left:568px;top:1008px;font-size:20.5px;font-weight:bold;color:#e0e0e0;letter-spacing:-1px;-webkit-text-stroke:0.8px #e0e0e0;letter-spacing:-2.2px">カーソル</div>
<div class="radio" style="left:570px;top:1049px;background:linear-gradient(#3a6fe0,#2a5bcc)"><div class="a" style="left:7.5px;top:7.5px;width:9px;height:9px;border-radius:50%;background:#eef2fb"></div></div>
<div class="radio" style="left:570px;top:1083px;background:linear-gradient(#4d4d4d,#5f5f5f)"></div>
<div class="radio" style="left:570px;top:1117px;background:linear-gradient(#4d4d4d,#5f5f5f)"></div>
<div class="a" style="left:602px;top:1051px;width:16px;height:20px;background:#e0e0e0"></div>
<div class="a" style="left:602px;top:1101.5px;width:21px;height:4px;background:#e0e0e0"></div>
<div class="a" style="left:611px;top:1119px;width:4px;height:23px;background:#e0e0e0"></div>
<div class="t" style="left:629px;top:1051px;font-size:20.5px;color:#dcdcdc;letter-spacing:-0.8px;-webkit-text-stroke:0.45px #dcdcdc">ブロック</div>
<div class="t" style="left:629px;top:1085px;font-size:20.5px;color:#dcdcdc;letter-spacing:-0.8px;-webkit-text-stroke:0.45px #dcdcdc;letter-spacing:-1.5px">アンダーライン</div>
<div class="t" style="left:629px;top:1119px;font-size:20.5px;color:#dcdcdc;letter-spacing:-0.8px;-webkit-text-stroke:0.45px #dcdcdc">垂直バー</div>
<div class="cb cboff" style="left:572px;top:1162px"></div>
<div class="t" style="left:604px;top:1163px;font-size:20.5px;color:#dcdcdc;letter-spacing:-0.8px;-webkit-text-stroke:0.45px #dcdcdc">点滅カーソル</div>
<div class="well" style="left:1002px;top:1046px"><div class="sw" style="background:#9b9b9b;border:1px solid #b0b0b0"></div></div>
<div class="t" style="left:1072px;top:1055.5px;font-size:20.5px;color:#dcdcdc;letter-spacing:-0.8px;-webkit-text-stroke:0.45px #dcdcdc;letter-spacing:-1.9px">カーソル</div>
<div class="a" style="left:1330px;top:1186px;width:40px;height:40px;border-radius:50%;background:#686868;box-shadow:0 1px 2px rgba(0,0,0,0.4)"></div>
<svg class="a" style="left:1330px;top:1186px" width="40" height="40" viewBox="0 0 40 40"><path d="M14.5 15.5 Q14.5 9.5 20.5 9.5 Q26.5 9.5 26.5 14.8 Q26.5 17.8 23 19.8 Q20.2 21.4 20.2 24.2 V25" fill="none" stroke="#efefef" stroke-width="3.2" stroke-linecap="round"/><circle cx="20.2" cy="30.4" r="2" fill="#efefef"/></svg></body></html>
